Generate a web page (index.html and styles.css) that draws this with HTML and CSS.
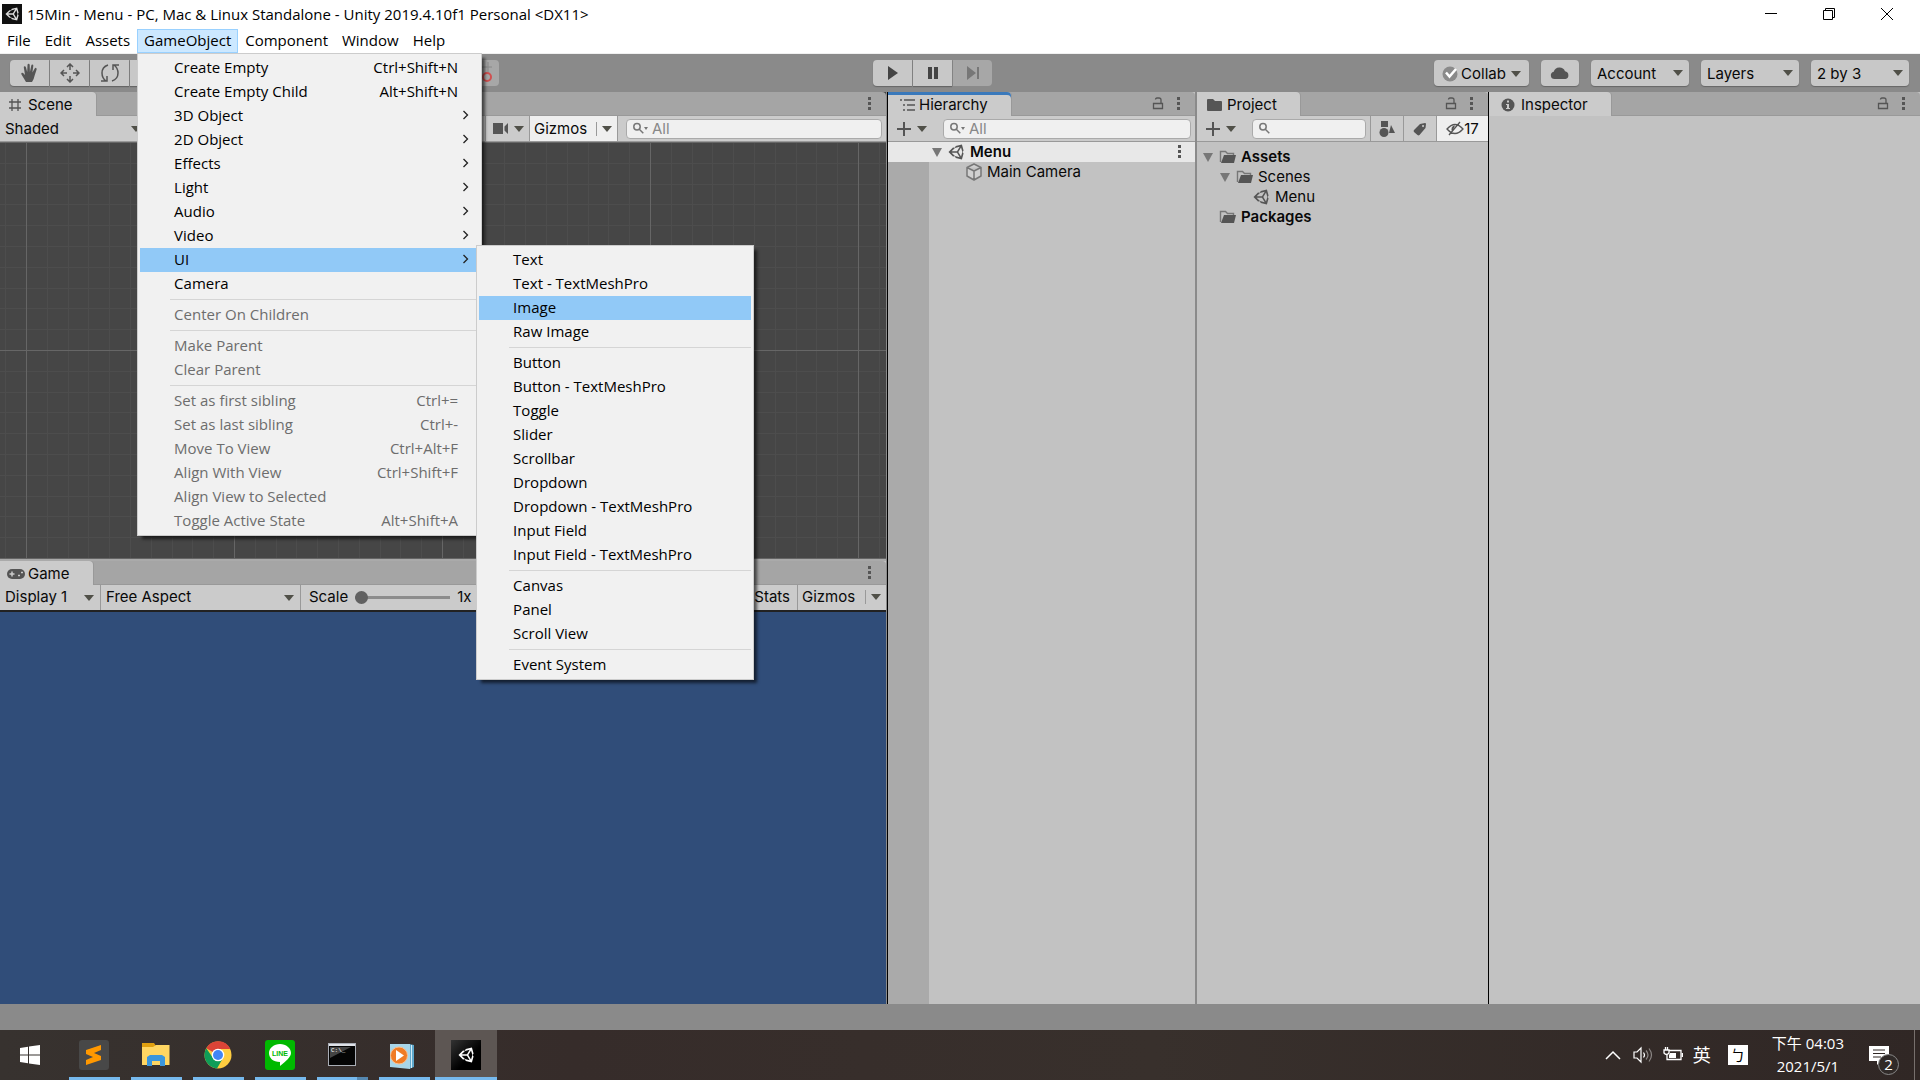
FILE: index.html
```html
<!DOCTYPE html>
<html lang="en">

<head>
    <meta charset="UTF-8" />
    <meta name="viewport" content="width=device-width, initial-scale=1.0" />
    <title>15Min - Menu - PC, Mac &amp; Linux Standalone - Unity 2019.4.10f1 Personal</title>
    <link rel="stylesheet" href="styles.css">
</head>

<body>
    <!-- shared icons -->
    <svg class="sprite" aria-hidden="true">
        <symbol id="i-unity" viewBox="0 0 512 512">
            <path fill="currentColor" fill-rule="evenodd" d="M498.1 206.4L445.3 14.7 248.2 66.1 219 116.1l-59.2-.4L15.5 256l144.3 140.3 59.2-.4 29.2 50.1 197.1 51.3 52.8-191.6-30-49.7zM223.8 124.2l150.8-37.7L288 232.3H114.9zM223.8 387.8L114.9 279.7H288l86.6 145.8zM416.8 401.8L330.2 256l86.6-145.8L458.6 256z" />
        </symbol>
        <symbol id="i-kebab" viewBox="0 0 6 14">
            <path fill="currentColor" d="M1 0h3v3H1zM1 5h3v3H1zM1 10h3v3H1z" />
        </symbol>
        <symbol id="i-lock" viewBox="0 0 12 14">
            <path fill="none" stroke="currentColor" stroke-width="1.3" d="M1.500 6.500h9v5h-9zM9 6V3q0-2-2-2H5Q3.500 1 3.500 2.500" />
        </symbol>
        <symbol id="i-search" viewBox="0 0 14 14">
            <path fill="none" stroke="currentColor" stroke-width="1.5" d="M5 1.500a3.200 3.200 0 1 1 0 6.400a3.200 3.200 0 1 1 0-6.400zM7.300 7.300l4 4" />
        </symbol>
        <symbol id="i-plus" viewBox="0 0 16 16">
            <path fill="none" stroke="currentColor" stroke-width="2" d="M8 1v14M1 8h14" />
        </symbol>
        <symbol id="i-folder" viewBox="0 0 18 14">
            <path fill="currentColor" d="M1 2q0-1 1-1h5l2 2h6q1 0 1 1v8q0 1-1 1H2q-1 0-1-1z" />
        </symbol>
        <symbol id="i-folder-open" viewBox="0 0 18 14">
            <path fill="none" stroke="#777" stroke-width="1.4" d="M1.500 12V1.500h5l2 2h6V6" />
            <path fill="currentColor" d="M5 5h12l-2 8H2z" />
        </symbol>
        <symbol id="i-arrow" viewBox="0 0 8 10">
            <path fill="none" stroke="#222" stroke-width="1.3" d="M1.500 1l4 4-4 4" />
        </symbol>
    </svg>

    <header class="titlebar">
        <span class="app-icon"><svg width="14" height="14"><use href="#i-unity" /></svg></span>
        <h1>15Min - Menu - PC, Mac &amp; Linux Standalone - Unity 2019.4.10f1 Personal &lt;DX11&gt;</h1>
        <div class="window-controls">
            <button aria-label="Minimize"><svg width="12" height="12" viewBox="0 0 12 12"><path d="M0 5.500h12" /></svg></button>
            <button aria-label="Restore"><svg width="12" height="12" viewBox="0 0 12 12"><path d="M.5 2.500h9v9h-9zM2.500 2V.5h9v9H10" /></svg></button>
            <button aria-label="Close"><svg width="12" height="12" viewBox="0 0 12 12"><path d="M0 0l12 12M12 0L0 12" /></svg></button>
        </div>
    </header>

    <nav class="menubar">
        <button>File</button>
        <button>Edit</button>
        <button>Assets</button>
        <div class="menu-root">
            <button class="open">GameObject</button>
            <div class="menu">
                <button>Create Empty <kbd>Ctrl+Shift+N</kbd></button>
                <button>Create Empty Child <kbd>Alt+Shift+N</kbd></button>
                <button>3D Object <svg><use href="#i-arrow" /></svg></button>
                <button>2D Object <svg><use href="#i-arrow" /></svg></button>
                <button>Effects <svg><use href="#i-arrow" /></svg></button>
                <button>Light <svg><use href="#i-arrow" /></svg></button>
                <button>Audio <svg><use href="#i-arrow" /></svg></button>
                <button>Video <svg><use href="#i-arrow" /></svg></button>
                <button class="selected">UI <svg><use href="#i-arrow" /></svg></button>
                <button>Camera</button>
                <hr>
                <button disabled>Center On Children</button>
                <hr>
                <button disabled>Make Parent</button>
                <button disabled>Clear Parent</button>
                <hr>
                <button disabled>Set as first sibling <kbd>Ctrl+=</kbd></button>
                <button disabled>Set as last sibling <kbd>Ctrl+-</kbd></button>
                <button disabled>Move To View <kbd>Ctrl+Alt+F</kbd></button>
                <button disabled>Align With View <kbd>Ctrl+Shift+F</kbd></button>
                <button disabled>Align View to Selected</button>
                <button disabled>Toggle Active State <kbd>Alt+Shift+A</kbd></button>
            </div>
            <div class="menu submenu">
                <button>Text</button>
                <button>Text - TextMeshPro</button>
                <button class="selected">Image</button>
                <button>Raw Image</button>
                <hr>
                <button>Button</button>
                <button>Button - TextMeshPro</button>
                <button>Toggle</button>
                <button>Slider</button>
                <button>Scrollbar</button>
                <button>Dropdown</button>
                <button>Dropdown - TextMeshPro</button>
                <button>Input Field</button>
                <button>Input Field - TextMeshPro</button>
                <hr>
                <button>Canvas</button>
                <button>Panel</button>
                <button>Scroll View</button>
                <hr>
                <button>Event System</button>
            </div>
        </div>
        <button>Component</button>
        <button>Window</button>
        <button>Help</button>
    </nav>

    <div class="toolbar">
        <div class="toolbar-left">
            <div class="button-group">
                <button aria-label="Hand"><svg width="20" height="20" viewBox="0 0 20 20"><path fill="#555" d="M6 19L1.500 11.500q-.8-1.300.4-1.700 1-.3 1.700.7L5 12 3.800 4.500q-.1-1.200.9-1.300.9 0 1.200 1.100L7.200 9 7.500 2q.1-1.200 1.100-1.200t1.100 1.200l.2 7 1.400-6.500q.3-1.100 1.200-.9 1 .2.8 1.400L12.400 9.500l2.300-4q.6-1 1.400-.6.900.5.500 1.500L14.500 13q-.5 3-2.500 6z" /></svg></button>
                <button aria-label="Move"><svg width="20" height="20" viewBox="0 0 20 20"><path fill="none" stroke="#555" stroke-width="1.500" d="M10 1v6M10 13v6M1 10h6M13 10h6M7 4l3-3 3 3M7 16l3 3 3-3M4 7l-3 3 3 3M16 7l3 3-3 3" /></svg></button>
                <button aria-label="Rotate"><svg width="20" height="20" viewBox="0 0 20 20"><path fill="none" stroke="#555" stroke-width="1.500" d="M8 2Q2 4 2 10q0 5 4 8M1 18h6v-5M12 18q6-2 6-8 0-5-4-8M19 2h-6v5" /></svg></button>
                <button aria-label="Scale"></button>
                <button aria-label="Rect"></button>
                <button aria-label="Transform"></button>
            </div>
            <button class="snap" disabled aria-label="Snap"><svg width="32" height="24" viewBox="0 0 32 24"><path stroke="#888" d="M14 6h14M24 1v10" /><circle cx="23" cy="16" r="4" fill="none" stroke="#d05050" stroke-width="2" /></svg></button>
        </div>
        <div class="button-group">
            <button aria-label="Play"><svg width="14" height="14" viewBox="0 0 14 14"><path fill="#444" d="M2 0l10 7-10 7z" /></svg></button>
            <button aria-label="Pause"><svg width="14" height="14" viewBox="0 0 14 14"><path fill="#444" d="M2 1h4v12H2zM8 1h4v12H8z" /></svg></button>
            <button disabled aria-label="Step"><svg width="14" height="14" viewBox="0 0 14 14"><path fill="#777" d="M1 0l9 7-9 7zM11 1h2v12h-2z" /></svg></button>
        </div>
        <div class="toolbar-right">
            <button class="collab">
                <svg width="16" height="16" viewBox="0 0 16 16"><circle cx="8" cy="8" r="7.500" fill="#8a8a8a" /><path fill="none" stroke="#fff" stroke-width="2.500" d="M4 6.500l3.500 4L14 3" /></svg>Collab<i class="caret"></i>
            </button>
            <button class="cloud" aria-label="Cloud"><svg width="20" height="14" viewBox="0 0 20 14"><path fill="#555" d="M4.500 13a3.700 3.700 0 0 1-.8-7.300A6 6 0 0 1 15 5.200 4 4 0 0 1 15.500 13z" /></svg></button>
            <label class="dropdown"><select aria-label="Account"><option>Account</option></select></label>
            <label class="dropdown"><select aria-label="Layers"><option>Layers</option></select></label>
            <label class="dropdown"><select aria-label="Layout"><option>2 by 3</option></select></label>
        </div>
    </div>

    <main class="workspace">
        <div class="views">
            <section class="panel scene">
                <div class="tabs">
                    <button class="tab"><svg width="14" height="14" viewBox="0 0 14 14"><path stroke="#555" stroke-width="1.300" d="M4 1v12M10 1v12M1 4h12M1 10h12" /></svg>Scene</button>
                    <button class="icon-button" aria-label="Scene options"><svg width="6" height="14"><use href="#i-kebab" /></svg></button>
                </div>
                <div class="bar">
                    <label class="dropdown shaded"><select aria-label="Draw mode"><option>Shaded</option></select></label>
                    <button class="cell camera" aria-label="Scene camera"><svg width="18" height="14" viewBox="0 0 18 14"><path fill="#555" d="M1 1h10v11H1zM12.500 4.500L16 1v11l-3.500-3.500z" /></svg><i class="caret"></i></button>
                    <button class="cell gizmos on">Gizmos<i class="bar-line"></i><i class="caret"></i></button>
                    <label class="search"><svg width="14" height="14"><use href="#i-search" /></svg><i class="dot-caret"></i><input type="text" placeholder="All" aria-label="Search scene"></label>
                </div>
                <svg class="grid">
                    <defs>
                        <pattern id="cells" x="26" width="208" height="208" patternUnits="userSpaceOnUse">
                            <path stroke="#4d4d4d" d="M21.500 0v208M42.500 0v208M62.500 0v208M83.500 0v208M104.500 0v208M125.500 0v208M146.500 0v208M166.500 0v208M187.500 0v208M0 21.500h208M0 42.500h208M0 62.500h208M0 83.500h208M0 104.500h208M0 125.500h208M0 146.500h208M0 166.500h208M0 187.500h208" />
                            <path stroke="#666" d="M.5 0v208M0 .5h208" />
                        </pattern>
                    </defs>
                    <rect width="100%" height="100%" fill="url(#cells)" />
                </svg>
            </section>
            <section class="panel game">
                <div class="tabs">
                    <button class="tab"><svg width="18" height="12" viewBox="0 0 18 12"><rect y="1" width="18" height="10" rx="5" fill="#555" /><path stroke="#ccc" stroke-width="1.500" d="M5 3.500v5M2.500 6h5M11 7.500h2M14 4.500h2" /></svg>Game</button>
                    <button class="icon-button" aria-label="Game options"><svg width="6" height="14"><use href="#i-kebab" /></svg></button>
                </div>
                <div class="bar">
                    <label class="dropdown display"><select aria-label="Display"><option>Display 1</option></select></label>
                    <label class="dropdown aspect"><select aria-label="Aspect"><option>Free Aspect</option></select></label>
                    <label class="scale">Scale <input type="range" min="1" max="5" value="1"> 1x</label>
                    <button class="cell stats">Stats</button>
                    <button class="cell gizmos">Gizmos<i class="bar-line"></i><i class="caret"></i></button>
                </div>
                <div class="game-view"></div>
            </section>
        </div>

        <section class="panel hierarchy">
            <div class="tabs">
                <button class="tab focused"><svg width="16" height="14" viewBox="0 0 16 14"><path stroke="#555" stroke-width="1.500" d="M0 2h2M4 2h11M3 7h2M7 7h8M3 12h2M7 12h8" /></svg>Hierarchy</button>
                <button class="icon-button" aria-label="Lock"><svg width="12" height="14"><use href="#i-lock" /></svg></button>
                <button class="icon-button" aria-label="Hierarchy options"><svg width="6" height="14"><use href="#i-kebab" /></svg></button>
            </div>
            <div class="bar">
                <button class="add" aria-label="Create"><svg width="16" height="16"><use href="#i-plus" /></svg><i class="caret"></i></button>
                <label class="search"><svg width="14" height="14"><use href="#i-search" /></svg><i class="dot-caret"></i><input type="text" placeholder="All" aria-label="Search hierarchy"></label>
            </div>
            <ul class="tree">
                <li class="scene-row"><i class="fold"></i><svg width="16" height="16"><use href="#i-unity" /></svg><b>Menu</b><button class="icon-button" aria-label="Scene menu"><svg width="6" height="14"><use href="#i-kebab" /></svg></button></li>
                <li class="object-row"><svg width="18" height="18" viewBox="0 0 18 18"><path fill="#d0d0d0" stroke="#777" stroke-width="1.500" stroke-linejoin="round" d="M9 1l7 3.500v8.500L9 17l-7-4V4.500zM2 4.500L9 8l7-3.500M9 8v9" /></svg>Main Camera</li>
            </ul>
        </section>

        <section class="panel project">
            <div class="tabs">
                <button class="tab"><svg width="18" height="14"><use href="#i-folder" /></svg>Project</button>
                <button class="icon-button" aria-label="Lock"><svg width="12" height="14"><use href="#i-lock" /></svg></button>
                <button class="icon-button" aria-label="Project options"><svg width="6" height="14"><use href="#i-kebab" /></svg></button>
            </div>
            <div class="bar">
                <button class="add" aria-label="Create"><svg width="16" height="16"><use href="#i-plus" /></svg><i class="caret"></i></button>
                <label class="search"><svg width="14" height="14"><use href="#i-search" /></svg><input type="text" aria-label="Search project"></label>
                <button class="cell" aria-label="Search by type"><svg width="16" height="18" viewBox="0 0 16 18"><path fill="#555" d="M2 1h7v6H2zM12 5l4 8h-6z" /><circle cx="5" cy="12.500" r="4.500" fill="#555" /></svg></button>
                <button class="cell" aria-label="Search by label"><svg width="14" height="14" viewBox="0 0 14 14"><path fill="#555" fill-rule="evenodd" d="M1 8l6-6 5-1q1 0 1 1l-.5 4-6 7q-1 .8-2 0L1 10q-.8-1 0-2zM10 3a1 1 0 1 0 .1 0z" /></svg></button>
                <button class="cell on"><svg width="18" height="16" viewBox="0 0 18 16"><path fill="none" stroke="#555" stroke-width="1.300" d="M1 8q8-9 16 0-8 9-16 0zM3 14L14 1" /><path fill="#555" d="M9 4.500a3.500 3.500 0 0 0-2.500 6z" /></svg>17</button>
            </div>
            <ul class="tree">
                <li><i class="fold"></i><svg width="18" height="14"><use href="#i-folder-open" /></svg><b>Assets</b></li>
                <li class="level-1"><i class="fold"></i><svg width="18" height="14"><use href="#i-folder-open" /></svg>Scenes</li>
                <li class="level-2"><svg width="16" height="16"><use href="#i-unity" /></svg>Menu</li>
                <li><i class="fold none"></i><svg width="18" height="14"><use href="#i-folder-open" /></svg><b>Packages</b></li>
            </ul>
        </section>

        <section class="panel inspector">
            <div class="tabs">
                <button class="tab"><svg width="14" height="14" viewBox="0 0 14 14"><circle cx="7" cy="7" r="6.500" fill="#555" /><path fill="#ccc" d="M6 2.500h2v2H6zM5 6h3v4h1v1H5v-1h1V7H5z" /></svg>Inspector</button>
                <button class="icon-button" aria-label="Lock"><svg width="12" height="14"><use href="#i-lock" /></svg></button>
                <button class="icon-button" aria-label="Inspector options"><svg width="6" height="14"><use href="#i-kebab" /></svg></button>
            </div>
        </section>
    </main>

    <div class="statusbar"></div>

    <footer class="taskbar">
        <button class="start" aria-label="Start"><svg width="20" height="20" viewBox="0 0 20 20"><path fill="#fff" d="M0 3l8-1.200V9.500H0zM9 1.600L20 0v9.500H9zM0 10.500h8v7.700L0 17zM9 10.500h11V20L9 18.400z" /></svg></button>
        <button class="app" aria-label="Sublime Text"><svg width="30" height="30" viewBox="0 0 30 30"><rect width="30" height="30" rx="3" fill="#484848" /><path fill="#ff9800" d="M7 10l15-5v5l-7 3 7 3v4L7 25v-5l7-3-7-3z" /></svg></button>
        <button class="app" aria-label="File Explorer"><svg width="30" height="30" viewBox="0 0 30 30"><path fill="#e0a010" d="M1 3h12l2 3v4H1z" /><path fill="#ffd662" d="M1 7h11l3-2h13.500v20H1z" /><path fill="#3a96dd" d="M6 26V17l3-2h12l3 2v9h-5v-5h-8v5z" /></svg></button>
        <button class="app" aria-label="Chrome"><svg width="30" height="30" viewBox="0 0 30 30"><circle cx="15" cy="15" r="13.500" fill="#ffcd40" /><path fill="#db4437" d="M15 15L3.300 8.200A13.500 13.500 0 0 1 27.300 9H15z" /><path fill="#0f9d58" d="M3.300 8.200A13.500 13.500 0 0 0 14 28.500L20 18l-5-3-5 3z" /><circle cx="15" cy="15" r="6.300" fill="#fff" /><circle cx="15" cy="15" r="5" fill="#4285f4" /></svg></button>
        <button class="app" aria-label="LINE"><svg width="30" height="30" viewBox="0 0 30 30"><rect width="30" height="30" rx="3" fill="#00b900" /><path fill="#fff" d="M15 4c6 0 11 4 11 9 0 4-5 8-11 13v-4C8 22 4 18 4 13s5-9 11-9z" /><text x="15" y="16" text-anchor="middle" class="line-text">LINE</text></svg></button>
        <button class="app grouped" aria-label="Command Prompt"><svg width="30" height="30" viewBox="0 0 30 30"><rect x="1.500" y="3.500" width="27" height="22" fill="#050505" stroke="#a9adb5" /><path fill="#dfe2e8" d="M2 4h26v2H2z" /><path fill="#444" d="M3 7h21L3 18z" /><text x="4" y="12" class="cmd-text">C:\_</text></svg></button>
        <button class="app" aria-label="Media Player"><svg width="30" height="30" viewBox="0 0 30 30"><path fill="#5ea8cc" d="M20 4l5 1v22l-5 2z" /><path fill="#a8d6ea" d="M1 4h20v25L1 27z" /><path stroke="#d5edf7" d="M22.500 5v23" /><circle cx="10" cy="15.500" r="8.500" fill="#f07c26" stroke="#fac090" /><path fill="#fff" d="M7 10l8 5.500L7 21z" /></svg></button>
        <button class="app active" aria-label="Unity"><span class="unity-tile"><svg width="16" height="16"><use href="#i-unity" /></svg></span></button>

        <div class="tray">
            <button aria-label="Show hidden icons"><svg width="16" height="10" viewBox="0 0 16 10"><path fill="none" stroke="#fff" stroke-width="1.500" d="M1 9l7-7 7 7" /></svg></button>
            <button aria-label="Volume"><svg width="20" height="18" viewBox="0 0 20 18"><path fill="none" stroke="#fff" stroke-width="1.200" d="M1 6h3l4-4v14l-4-4H1zM10.500 6.500q2 2.500 0 5" /><path fill="none" stroke="#8b8684" stroke-width="1.200" d="M13 4.500q4 4.500 0 9M16 2.500q5 6.500 0 13" /></svg></button>
            <button aria-label="Battery"><svg width="20" height="16" viewBox="0 0 20 16"><path fill="none" stroke="#fff" stroke-width="1.300" d="M6 3.500h12v9H4V8M19.500 6v4M1 3h5v3q-2.500 3-5 0zM2.500 0v3M4.500 0v3" /><path fill="#fff" d="M7 6h6v5H6V8z" /></svg></button>
            <button class="lang">英</button>
            <button class="ime">ㄅ</button>
            <button class="clock"><time>下午 04:03</time><time>2021/5/1</time></button>
            <button class="notify" aria-label="Notifications"><svg width="20" height="20" viewBox="0 0 20 20"><path fill="#fff" d="M0 1h20v15h-8l-4 4v-4H0z" /><path stroke="#302825" d="M4 5h12M4 8.500h12M4 12h8" /></svg><span class="badge">2</span></button>
            <button class="show-desktop" aria-label="Show desktop"></button>
        </div>
    </footer>
</body>

</html>
```
FILE: styles.css
```css
:root {
    --chrome: #8a8a8a;
    --tabs: #a5a5a5;
    --bar: #cbcbcb;
    --panel: #c2c2c2;
    --line: #999;
    --icon: #555;
    --text: #090909;
    --select: #91c9f7;
    --ui-font: "Open Sans", "Noto Sans", "Noto Sans CJK TC", sans-serif;
}

* {
    box-sizing: border-box;
}

body {
    margin: 0;
    height: 100vh;
    display: flex;
    flex-direction: column;
    overflow: hidden;
    font: 15px/20px Inter, sans-serif;
    color: var(--text);
    background: var(--chrome);
}

button,
select,
input {
    font: inherit;
    color: inherit;
    margin: 0;
    padding: 0;
    border: none;
    background: none;
    border-radius: 0;
}

button {
    display: flex;
    align-items: center;
    justify-content: center;
    white-space: nowrap;
}

svg {
    flex: none;
    display: block;
}

.sprite {
    position: absolute;
    width: 0;
    height: 0;
}

/* title and menus */
.titlebar {
    display: flex;
    align-items: center;
    height: 28px;
    padding: 0 4px 0 2px;
    background: #fff;
    font-family: var(--ui-font);
}

.titlebar h1 {
    margin: 0 0 0 5px;
    font-size: 15px;
    font-weight: 400;
    color: #000;
}

.app-icon {
    display: grid;
    place-items: center;
    width: 20px;
    height: 20px;
    background: #111;
    color: #ddd;
}

.window-controls {
    display: flex;
    margin-left: auto;
}

.window-controls button {
    width: 58px;
    height: 28px;
}

.window-controls path {
    fill: none;
    stroke: #000;
}

.menubar {
    display: flex;
    height: 26px;
    padding-top: 1px;
    background: #fff;
    border-bottom: 1px solid #f0f0f0;
    font-family: var(--ui-font);
    color: #000;
}

.menubar > button,
.menu-root > button {
    height: 24px;
    padding: 0 6px 2px;
    border: 1px solid transparent;
}

.menu-root {
    position: relative;
}

.menu-root > .open {
    background: #cce8ff;
    border-color: #99d1ff;
}

.menu {
    position: absolute;
    z-index: 2;
    top: 24px;
    left: 0;
    width: 345px;
    padding: 2px;
    background: #f1f1f1;
    border: 1px solid #ccc;
    box-shadow: 4px 4px 3px -1px rgba(0, 0, 0, 0.6);
}

.submenu {
    z-index: 3;
    top: 216px;
    left: 339px;
    width: 278px;
}

.menu button {
    width: 100%;
    height: 24px;
    padding: 0 21px 2px 34px;
    justify-content: flex-start;
}

.menu button:disabled {
    color: #6d6d6d;
}

.menu .selected {
    background: var(--select);
}

.menu kbd {
    margin-left: auto;
    font: inherit;
}

.menu svg {
    width: 8px;
    height: 10px;
    margin: 0 -12px 0 auto;
}

.menu hr {
    height: 1px;
    margin: 3px 0 3px 30px;
    border: none;
    background: #d5d5d5;
}

/* main toolbar */
.toolbar {
    display: flex;
    align-items: center;
    height: 38px;
    padding-right: 11px;
}

.toolbar-left {
    display: flex;
    width: 46%;
    max-width: 873px;
    padding-left: 10px;
}

.toolbar-right {
    display: flex;
    gap: 12px;
    margin-left: auto;
}

.button-group {
    display: flex;
    gap: 1px;
}

.toolbar button,
.toolbar .dropdown {
    height: 26px;
    background: #c8c8c8;
    box-shadow: 0 1px 1px #666;
}

.button-group button {
    width: 39px;
}

.button-group button:first-child {
    border-radius: 4px 0 0 4px;
}

.button-group button:last-child {
    border-radius: 0 4px 4px 0;
}

.toolbar button:disabled {
    background: #a7a7a7;
    box-shadow: none;
}

.toolbar .snap {
    width: 39px;
    margin-left: auto;
    margin-right: 374px;
    border-radius: 4px;
}

.toolbar .collab {
    width: 95px;
    padding-top: 1px;
    border-radius: 4px;
}

.collab svg {
    margin-right: 3px;
}

.collab .caret {
    margin-left: 5px;
}

.toolbar .cloud {
    width: 38px;
    border-radius: 4px;
}

.toolbar .dropdown {
    width: 98px;
    padding-top: 1px;
    border-radius: 4px;
}

.dropdown {
    display: flex;
    position: relative;
    height: 100%;
}

.dropdown select {
    width: 100%;
    padding: 0 24px 0 6px;
    appearance: none;
    outline: none;
}

.caret,
.dropdown::after {
    content: "";
    border: 5px solid transparent;
    border-top: 6px solid #505048;
    border-bottom: none;
}

.dropdown::after {
    position: absolute;
    right: 6px;
    top: 10px;
    pointer-events: none;
}

/* panels */
.workspace {
    flex: 1;
    min-height: 0;
    display: grid;
    grid-template-columns: 888fr 309fr 292fr 431fr;
}

.views {
    display: flex;
    flex-direction: column;
    min-width: 0;
    padding-right: 1px;
    border-right: 1px solid #000;
}

.panel {
    display: flex;
    flex-direction: column;
    min-width: 0;
    background: var(--panel);
}

.scene {
    flex: 468;
    min-height: 0;
    background: #464646;
    border-bottom: 2px solid #aaa;
}

.game {
    flex: 444;
    min-height: 0;
}

.game .bar {
    border-bottom: 2px solid #222;
    height: 27px;
}

.tabs {
    display: flex;
    align-items: center;
    flex: none;
    height: 24px;
    padding-right: 13px;
    background: var(--tabs);
    border-radius: 0 4px 0 0;
    box-shadow: inset 0 -1px var(--line);
}

.tab {
    height: 24px;
    padding: 2px 23px 0 8px;
    gap: 6px;
    margin-right: auto;
    background: var(--bar);
    border-radius: 0 4px 0 0;
    box-shadow: 1px 0 #999;
}

.tab svg {
    color: var(--icon);
}

.game .tab {
    gap: 3px;
    padding-left: 7px;
}

.hierarchy .tab {
    padding-left: 12px;
    gap: 3px;
}

.project .tab {
    padding-left: 9px;
    gap: 3px;
}

.inspector .tab {
    padding-left: 12px;
}

.tab.focused {
    box-shadow: inset 0 3px #3a79bb, 1px 0 #999;
}

.icon-button {
    height: 20px;
    color: var(--icon);
}

.icon-button + .icon-button {
    margin-left: 12px;
}

.bar {
    display: flex;
    align-items: center;
    flex: none;
    height: 26px;
    background: var(--bar);
    border-bottom: 1px solid var(--line);
}

.bar .dropdown {
    border-right: 1px solid var(--line);
}

.bar .dropdown select {
    padding-left: 5px;
}

.shaded {
    width: 148px;
}

.display {
    width: 101px;
}

.aspect {
    width: 200px;
}

.cell {
    flex: none;
    height: 100%;
    padding: 0 7px;
    border-left: 1px solid var(--line);
}

.cell.on {
    background: #efefef;
}

.camera {
    width: 44px;
    margin-left: auto;
    gap: 4px;
}

.scene .gizmos {
    border-right: 1px solid var(--line);
}

.gizmos {
    width: 89px;
    padding: 0 5px 0 4px;
    justify-content: space-between;
}

.bar-line {
    width: 1px;
    height: 14px;
    margin-left: 4px;
    background: var(--line);
}

.stats {
    margin-left: auto;
}

.search {
    display: flex;
    align-items: center;
    height: 20px;
    flex: 1;
    min-width: 0;
    margin: 0 4px 0 8px;
    padding: 0 5px;
    background: #f0f0f0;
    border: 1px solid #aaa;
    border-radius: 4px;
    color: #777;
}

.search input {
    flex: 1;
    min-width: 0;
    padding-left: 4px;
    outline: none;
}

.search input::placeholder {
    color: #888;
    opacity: 1;
}

.scene .search {
    flex: 0 0 256px;
}

.dot-caret {
    margin-left: -2px;
    border: 2px solid transparent;
    border-top: 3px solid #777;
    border-bottom: none;
}

.scale {
    display: flex;
    align-items: center;
    gap: 7px;
    padding-left: 8px;
}

.scale input {
    width: 95px;
    height: 13px;
    appearance: none;
    background: linear-gradient(#8c8c8c, #8c8c8c) center / 100% 3px no-repeat;
}

.scale input::-webkit-slider-thumb {
    appearance: none;
    width: 13px;
    height: 13px;
    border-radius: 50%;
    background: #616161;
}

.grid {
    flex: 1;
    width: 100%;
    min-height: 0;
}

.game-view {
    flex: 1;
    background: #304d79;
}

.hierarchy {
    border-right: 2px solid var(--chrome);
}

.project {
    border-right: 1px solid #000;
}

.add {
    gap: 5px;
    padding: 0 8px;
    color: var(--icon);
}

.project .cell {
    width: 33px;
    padding: 0;
}

.project .cell.on {
    width: 52px;
}

.tree {
    flex: 1;
    margin: 0;
    padding: 0;
    list-style: none;
}

.tree li {
    display: flex;
    align-items: center;
    height: 20px;
    color: var(--text);
}

.tree b {
    font-weight: 600;
}

.tree svg {
    margin-right: 4px;
    color: var(--icon);
}

.fold {
    margin-right: 6px;
    border: 5px solid transparent;
    border-top: 9px solid #777;
    border-bottom: none;
}

.fold.none {
    visibility: hidden;
}

.hierarchy .tree {
    background: linear-gradient(to right, #aaa 41px, transparent 41px);
}

.tree .scene-row {
    padding: 0 12px 0 44px;
    background: #e8e8e8;
}

.scene-row > svg {
    margin-right: 6px;
}

.scene-row .icon-button {
    margin-left: auto;
}

.scene-row .icon-button svg {
    margin: 0;
}

.tree .object-row {
    padding-left: 77px;
}

.project .tree {
    padding: 5px 0 0 6px;
}

.project .level-1 {
    padding-left: 17px;
}

.project .level-2 {
    padding-left: 50px;
}

.project .level-2 svg {
    margin-right: 6px;
}

.statusbar {
    height: 26px;
}

/* windows taskbar */
.taskbar {
    display: flex;
    height: 50px;
    background: linear-gradient(to right, #37322f, #362c2a 30%, #38302c 60%, #302725);
    color: #fff;
    font-family: var(--ui-font);
}

.start {
    width: 63px;
    padding-right: 3px;
}

.app {
    width: 62px;
    background: linear-gradient(#76b9ed, #76b9ed) center bottom / 51px 3px no-repeat;
}

.app.grouped {
    background: linear-gradient(to right, #76b9ed 40px, #5588b0 40px) center bottom / 51px 3px no-repeat;
}

.app.active {
    background: linear-gradient(#76b9ed, #76b9ed) center bottom / 100% 3px no-repeat #5d5653;
}

.unity-tile {
    display: grid;
    place-items: center;
    width: 30px;
    height: 30px;
    background: linear-gradient(135deg, #333, #000 60%);
}

.line-text {
    font: bold 7px "Liberation Sans", sans-serif;
    fill: #00b900;
}

.cmd-text {
    font: 6px "Liberation Mono", monospace;
    fill: #fff;
}

.tray {
    display: flex;
    align-items: center;
    margin-left: auto;
    gap: 10px;
}

.tray > button:first-child {
    margin-right: 2px;
}

.lang {
    font-size: 18px;
}

.ime {
    width: 20px;
    height: 20px;
    margin: 0 14px 0 7px;
    background: #fff;
    color: #000;
}

.clock {
    flex-direction: column;
}

.clock time {
    line-height: 23px;
}

.notify {
    position: relative;
    margin: 0 15px;
}

.badge {
    position: absolute;
    left: 9px;
    top: 9px;
    width: 21px;
    height: 21px;
    line-height: 19px;
    border: 1px solid #888;
    border-radius: 50%;
    background: #302a28;
}

.show-desktop {
    width: 6px;
    height: 50px;
    border-left: 1px solid #77706d;
}
```
